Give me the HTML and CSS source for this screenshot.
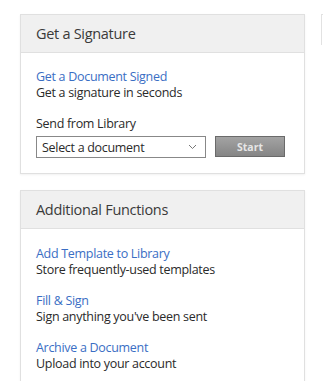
FILE: index.html
```html
<!DOCTYPE html>
<html>
<head>
<meta charset="utf-8">
<link rel="stylesheet" href="styles.css">
</head>
<body>
<div class="page">
  <div class="column">
    <section class="card">
      <div class="card-head">Get a Signature</div>
      <div class="card-body">
        <div class="item">
          <a class="link">Get a Document Signed</a>
          <div class="desc">Get a signature in seconds</div>
        </div>
        <div class="lib-label">Send from Library</div>
        <div class="lib-row">
          <div class="select">
            <span>Select a document</span>
            <svg class="chev" width="9" height="6" viewBox="0 0 9 6"><path d="M1 1l3.5 3.5L8 1" fill="none" stroke="#777" stroke-width="1"/></svg>
          </div>
          <button class="start">Start</button>
        </div>
      </div>
    </section>
    <section class="card card2">
      <div class="card-head">Additional Functions</div>
      <div class="card-body">
        <div class="item">
          <a class="link">Add Template to Library</a>
          <div class="desc">Store frequently-used templates</div>
        </div>
        <div class="item">
          <a class="link">Fill &amp; Sign</a>
          <div class="desc">Sign anything you've been sent</div>
        </div>
        <div class="item">
          <a class="link">Archive a Document</a>
          <div class="desc">Upload into your account</div>
        </div>
      </div>
    </section>
  </div>
  <div class="side"></div>
</div>
</body>
</html>
```

FILE: styles.css
```css
html, body {
  margin: 0;
  padding: 0;
  background: #fff;
}
body {
  font-family: "Open Sans", "Liberation Sans", sans-serif;
  color: #333;
  overflow: hidden;
}
.page {
  display: flex;
  padding-top: 14px;
  padding-left: 20px;
}
.column {
  width: 285px;
  flex: none;
}
.side {
  margin-left: 16px;
  width: 20px;
  height: 30px;
  border-left: 1px solid #e2e2e2;
  border-top: 1px solid #e2e2e2;
}
.card {
  border: 1px solid #e0e0e0;
  background: #fff;
  box-shadow: 0 1px 2px rgba(0,0,0,0.06);
}
.card2 {
  margin-top: 16px;
}
.card-head {
  background: #f0f0f0;
  border-bottom: 1px solid #e0e0e0;
  height: 37px;
  line-height: 38px;
  padding-left: 15px;
  font-size: 14.5px;
  color: #3a3a3a;
  letter-spacing: -0.3px;
}
.card-body {
  padding: 16px 16px 15px 15px;
}
.card2 .card-body {
  padding-top: 17px;
}
.item {
  margin-bottom: 15px;
  line-height: 16px;
  font-size: 12.5px;
  letter-spacing: -0.3px;
}
.link {
  display: block;
  color: #3a6ec4;
}
.desc {
  color: #2a2a2a;
}
.lib-label {
  font-size: 12.5px;
  letter-spacing: -0.3px;
  line-height: 16px;
  color: #2a2a2a;
  margin-top: 1px;
}
.lib-row {
  display: flex;
  align-items: flex-start;
  margin-top: 4px;
}
.select {
  width: 155px;
  height: 20px;
  border: 1px solid #888;
  display: flex;
  align-items: center;
  justify-content: space-between;
  padding: 0 8px 0 5px;
  box-sizing: content-box;
  font-size: 12.5px;
  letter-spacing: -0.3px;
  color: #2a2a2a;
}
.chev {
  display: block;
}
.start {
  margin-left: 9px;
  width: 70px;
  height: 21px;
  border: 1px solid #6a6a6a;
  background: linear-gradient(#a3a3a3, #858585);
  color: #e6e6e6;
  font-family: "Open Sans", "Liberation Sans", sans-serif;
  font-weight: bold;
  font-size: 10.5px;
  padding: 0;
}
```
